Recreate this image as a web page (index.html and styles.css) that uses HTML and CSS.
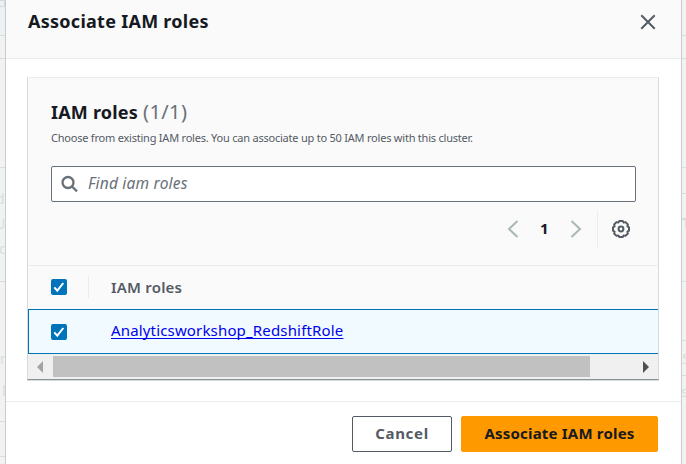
FILE: index.html
```html
<!DOCTYPE html>
<html lang="en">
<head>
<meta charset="utf-8">
<title>Associate IAM roles</title>
<link rel="stylesheet" href="styles.css">
</head>
<body>
<div class="backdrop">
  <svg class="strip strip-left" width="6" height="464" viewBox="0 0 6 464" aria-hidden="true">
    <path fill="#f2f2f2" d="M0 0h6v464H0z"/>
    <path fill="#edf1f3" d="M0 0h6v35H0z"/>
    <path fill="#f0f3f3" d="M0 167h6v114H0z"/>
    <path stroke="#d5dfe3" d="M0 35.500h6M0 167.500h6M0 281.500h6"/>
    <path stroke="#dcdcdc" d="M0 58.500h6M0 421.500h6M0 456.500h6"/>
    <path fill="none" stroke="#d4d8da" d="M0 .5h4.500v6H0"/>
  </svg>
  <svg class="strip strip-right" width="5" height="464" viewBox="0 0 5 464" aria-hidden="true">
    <path fill="#f1f3f3" d="M0 0h5v464H0z"/>
    <path stroke="#dadddd" d="M0 35.500h5M0 58.500h5M0 193.500h5M0 218.500h5M0 340.500h5M0 375.500h5"/>
    <path stroke="#d5e3e9" d="M0 167.500h5M0 281.500h5"/>
  </svg>
  <span class="ghost g1">d</span><span class="ghost g2">U</span><span class="ghost g3">c</span><span class="ghost g4">n</span><span class="ghost g5">l</span>
  <span class="ghost g6">T</span><span class="ghost g7">5</span><span class="ghost g8">s</span>
</div>
<main class="modal">
  <header class="modal-head">
    <h1><span class="t-title">Associate IAM roles</span></h1>
    <svg class="close" width="16" height="16" viewBox="0 0 16 16" fill="none" stroke="#545b64" stroke-width="2"><path d="M1.300 1.300l13.400 13.400M14.700 1.300L1.300 14.700"/></svg>
  </header>
  <section class="body">
    <div class="card">
      <div class="card-head">
        <h2><span class="t-head">IAM roles</span><span class="count">(1/1)</span></h2>
        <p><span class="t-desc">Choose from existing IAM roles. You can associate up to 50 IAM roles with this cluster.</span></p>
        <div class="search">
          <svg width="18" height="18" viewBox="0 0 18 18" fill="none" stroke="#687078" stroke-width="2.300"><circle cx="7" cy="7.500" r="5.500"/><path d="M11 11.500l5 4.800"/></svg>
          <span class="t-find">Find iam roles</span>
        </div>
        <div class="pager">
          <svg class="prev" width="12" height="18" viewBox="0 0 12 18" fill="none" stroke="#aab7b8" stroke-width="2"><path d="M10.500 1L2 9l8.500 8"/></svg>
          <b>1</b>
          <svg class="next" width="12" height="18" viewBox="0 0 12 18" fill="none" stroke="#aab7b8" stroke-width="2"><path d="M1.500 1L10 9l-8.500 8"/></svg>
          <i class="rule"></i>
          <svg class="gear" width="20" height="20" viewBox="-10 -10 20 20" fill="none" stroke="#545b64" stroke-width="2"><path stroke-linejoin="round" d="M-1.700-8H1.700L2.600-6.400 4.500-6.900 6.900-4.500 6.400-2.600 8-1.700V1.700L6.400 2.600 6.900 4.500 4.500 6.900 2.600 6.400 1.700 8H-1.700L-2.600 6.400-4.500 6.900-6.900 4.500-6.400 2.600-8 1.700V-1.700L-6.400-2.600-6.900-4.500-4.500-6.900-2.600-6.400z"/><circle r="2.400"/></svg>
        </div>
      </div>
      <div class="row row-head">
        <svg class="check" width="16" height="16" viewBox="0 0 16 16"><rect width="16" height="16" rx="2" fill="#0073bb"/><path d="M3.300 8.300l3 3.300 6-7.600" fill="none" stroke="#fff" stroke-width="2"/></svg>
        <i class="col-rule"></i><span class="t-col">IAM roles</span>
      </div>
      <div class="row row-selected">
        <svg class="check" width="16" height="16" viewBox="0 0 16 16"><rect width="16" height="16" rx="2" fill="#0073bb"/><path d="M3.300 8.300l3 3.300 6-7.600" fill="none" stroke="#fff" stroke-width="2"/></svg>
        <a class="t-link" href="#">Analyticsworkshop_RedshiftRole</a>
      </div>
      <div class="scroll">
        <svg width="6" height="12" viewBox="0 0 6 12"><path d="M6 0v12L0 6z" fill="#a3a3a3"/></svg>
        <div class="thumb"></div>
        <svg class="arrow-right" width="6" height="12" viewBox="0 0 6 12"><path d="M0 0v12l6-6z" fill="#505050"/></svg>
      </div>
    </div>
  </section>
  <footer class="modal-foot">
    <button class="btn"><span class="t-cancel">Cancel</span></button>
    <button class="btn primary"><span class="t-submit">Associate IAM roles</span></button>
  </footer>
</main>
</body>
</html>
```
FILE: styles.css
```css
* { box-sizing: border-box; }
body { margin: 0; width: 686px; height: 464px; overflow: hidden; background: #f2f3f3; font-family: "Noto Sans", sans-serif; color: #16191f; }
h1, h2, p { margin: 0; white-space: nowrap; }
.backdrop { position: absolute; width: 686px; height: 464px; overflow: hidden; }
.strip { position: absolute; top: 0; }
.strip-left { left: 0; }
.strip-right { right: 0; }
.ghost { position: absolute; font-size: 14px; line-height: 18px; color: #d9dddd; }
.g1 { left: -4px; top: 190px; }
.g2 { left: -5px; top: 215px; }
.g3 { left: -1px; top: 240px; }
.g4 { left: 0; top: 350px; color: #d4e0e9; }
.g5 { left: 2px; top: 382px; }
.g6 { left: 682px; top: 215px; }
.g7 { left: 682px; top: 350px; }
.g8 { left: 681px; top: 383px; }
.modal { position: relative; margin: 0 5px 0 6px; height: 464px; background: #fff; box-shadow: 0 0 0 1px #c9cccd; }
.modal-head { height: 59px; background: #fafafa; border-bottom: 1px solid #eaeded; display: flex; justify-content: space-between; padding: 7px 25px 0 22px; }
h1 { font-size: 18px; line-height: 28px; letter-spacing: 0.27px; }
.close { margin-top: 7px; }
.body { padding: 18px 22px 0 21px; height: 343px; border-bottom: 1px solid #eaeded; }
.card { height: 303px; background: #fafafa; border: 1px solid #d5dbdb; border-top-color: #eaeded; border-bottom-color: #879596; border-radius: 1px; box-shadow: 0 1px 0 #d5dbdb; }
.card-head { height: 188px; padding: 20px 22px 0 23px; border-bottom: 1px solid #eaeded; }
h2 { font-size: 18px; line-height: 28px; display: flex; gap: 5px; }
.t-head { letter-spacing: 0.2px; }
.count { font-weight: 400; font-size: 20px; letter-spacing: 0.4px; color: #687078; }
p { font-size: 11px; line-height: 16px; margin-top: 4px; color: #545b64; letter-spacing: -0.22px; }
.search { margin-top: 20px; height: 36px; border: 1px solid #687078; border-radius: 2px; background: #fff; display: flex; align-items: center; padding-left: 9px; gap: 9px; color: #687078; font-size: 15px; font-style: italic; }
.t-find { font-size: 15.5px; letter-spacing: 0.2px; margin-top: -2px; }
.pager { height: 36px; margin-top: 9px; display: flex; align-items: center; justify-content: flex-end; }
.pager b { width: 8px; margin: -3px 22px 0 21px; font-size: 15px; }
.rule { width: 1px; height: 36px; background: #eaeded; margin: 0 13px 0 15px; }
.gear { margin-right: 5px; }
.row { display: flex; align-items: center; padding-left: 23px; height: 43px; }
.row-head { padding-bottom: 2px; }
.col-rule { width: 1px; height: 22px; background: #eaeded; margin: 0 22px 0 21px; }
.t-col { font-weight: 600; font-size: 15px; letter-spacing: 0.2px; color: #545b64; }
.row-selected { height: 45px; padding-left: 22px; gap: 44px; background: #f1faff; border: 1px solid #0073bb; border-right: 0; }
a { color: #00e; font-size: 15px; letter-spacing: 0.16px; text-underline-offset: 2px; text-decoration-skip-ink: none; margin-top: -3px; }
.scroll { height: 25px; background: #f0f0f0; display: flex; align-items: center; padding: 0 9px; }
.thumb { width: 537px; height: 21px; background: #c1c1c1; margin-left: 10px; }
.arrow-right { margin-left: auto; }
.modal-foot { display: flex; justify-content: flex-end; gap: 9px; padding: 14px 23px 0 0; }
.btn { width: 100px; height: 36px; padding: 0 0 3px; font: bold 15px "Noto Sans", sans-serif; color: #545b64; background: #fff; border: 1px solid #545b64; border-radius: 2px; }
.t-cancel { letter-spacing: 0.7px; }
.t-submit { letter-spacing: 0.2px; }
.primary { width: 197px; color: #16191f; background: #f90; border-color: #f90; }
```
